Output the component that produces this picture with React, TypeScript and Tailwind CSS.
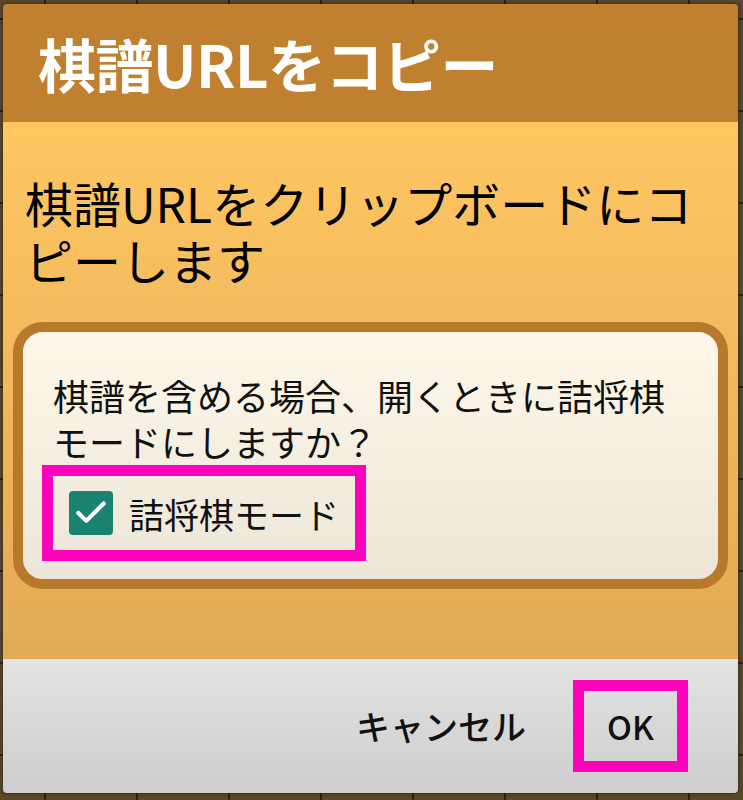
import { Check } from 'lucide-react';

export default function App() {
  return (
    <div className="w-[743px] h-[800px] pt-[4px] pl-[3px] pr-[5px] pb-[7px] bg-[#5a4829] bg-[repeating-linear-gradient(90deg,transparent_0px,transparent_44px,#2e2414_44px,#2e2414_46px,transparent_46px,transparent_92px),repeating-linear-gradient(0deg,transparent_0px,transparent_44px,#2e2414_44px,#2e2414_46px,transparent_46px,transparent_92px)] font-['Noto_Sans_CJK_JP',sans-serif]">
      {/* Dialog */}
      <div className="flex flex-col h-full rounded-[4px] overflow-hidden shadow-[0_0_4px_rgba(0,0,0,0.5)]">
        {/* Title bar */}
        <div className="h-[118px] shrink-0 bg-[#c0802f] flex items-center pl-[35px]">
          <h1 className="text-[58px] font-bold text-white leading-none tracking-[-0.5px]">棋譜URLをコピー</h1>
        </div>

        {/* Body */}
        <div className="flex-1 bg-gradient-to-b from-[#ffc662] to-[#e1aa55] pt-[52px] px-[10px]">
          <p className="px-[12px] text-[48px] leading-[57px] text-black">
            棋譜URLをクリップボードにコピーします
          </p>

          <div className="mt-[34px] rounded-[30px] border-[10px] border-[#b77a2c] bg-gradient-to-b from-[#fef8ea] to-[#ece6d9] pt-[40px] pb-[18px] pl-[19px] pr-[20px]">
            <p className="pl-[11px] text-[36px] leading-[46px] text-[#111]">
              棋譜を含める場合、開くときに詰将棋モードにしますか？
            </p>
            <div className="mt-[1px] w-[324px] h-[96px] border-[11px] border-[#ff00bb] flex items-center pl-[16px]">
              <span className="w-[44px] h-[44px] rounded-[4px] bg-[#1a8272] flex items-center justify-center">
                <Check className="text-white" size={38} strokeWidth={2.6} />
              </span>
              <span className="ml-[16px] text-[35px] leading-none text-[#111]">詰将棋モード</span>
            </div>
          </div>
        </div>

        {/* Buttons */}
        <div className="h-[134px] shrink-0 bg-gradient-to-b from-[#e3e3e3] to-[#cdcdcd] flex items-center justify-end pr-[50px]">
          <span className="text-[34px] font-medium leading-none text-[#111]">キャンセル</span>
          <div className="ml-[47px] w-[115px] h-[92px] border-[11px] border-[#ff00bb] flex items-center justify-center">
            <span className="text-[33px] font-medium leading-none text-[#111]">OK</span>
          </div>
        </div>
      </div>
    </div>
  );
}
